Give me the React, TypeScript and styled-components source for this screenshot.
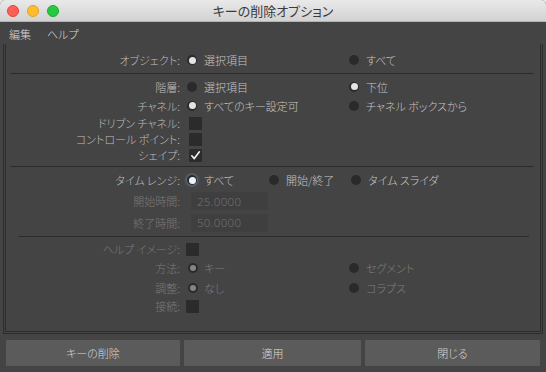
import React from 'react';
import styled, { createGlobalStyle } from 'styled-components';

const GlobalStyle = createGlobalStyle`
  html, body {
    margin: 0;
    padding: 0;
    background: #ececec;
  }
`;

const Window = styled.div`
  width: 546px;
  height: 372px;
  display: flex;
  flex-direction: column;
  background: #444444;
  border-radius: 5px 5px 0 0;
  overflow: hidden;
  font-family: "Noto Sans CJK JP", "Noto Sans", sans-serif;
  font-feature-settings: "palt";
  font-weight: 300;
  font-size: 11px;
`;

const TitleBar = styled.div`
  flex: none;
  height: 22px;
  box-sizing: border-box;
  display: grid;
  grid-template-columns: 1fr auto 1fr;
  align-items: center;
  background: linear-gradient(#e9e9e9, #d2d2d2);
  border-bottom: 1px solid #b4b4b4;
`;

const Lights = styled.div`
  display: flex;
  gap: 8px;
  padding-left: 7px;
`;

const Light = styled.span<{ $c: string; $b: string }>`
  width: 12px;
  height: 12px;
  border-radius: 50%;
  box-sizing: border-box;
  background: ${(p) => p.$c};
  border: 1px solid ${(p) => p.$b};
`;

const Title = styled.div`
  font-size: 13px;
  font-weight: 400;
  color: #3a3a3a;
  line-height: 1;
`;

const MenuBar = styled.div`
  flex: none;
  height: 22px;
  display: flex;
  align-items: center;
  gap: 16px;
  padding: 1px 0 0 9px;
  box-sizing: border-box;
  color: #d8d8d8;
`;

const Frame = styled.div`
  flex: none;
  height: 290px;
  margin: 0 3px;
  box-sizing: border-box;
  border: 1px solid #2c2c2c;
  border-top: 0;
  padding: 0 1px 1px;
  display: flex;
`;

const Inner = styled.div`
  flex: 1;
  border: 1px solid #2c2c2c;
  border-top: 0;
  padding-top: 6px;
  display: flex;
  flex-direction: column;
`;

const Separator = styled.div<{ $l: number; $r: number }>`
  height: 1px;
  background: #2c2c2c;
  margin: 3px ${(p) => p.$r}px 3px ${(p) => p.$l}px;
  flex: none;
`;

const Row = styled.div<{ $h: number }>`
  flex: none;
  height: ${(p) => p.$h}px;
  display: grid;
  grid-template-columns: 175px 1fr;
  align-items: center;
`;

const Label = styled.span<{ $dim?: boolean }>`
  text-align: right;
  padding-right: 1px;
  white-space: nowrap;
  color: ${(p) => (p.$dim ? '#7a7a7a' : '#bdbdbd')};
`;

const Controls = styled.div<{ $indent: number }>`
  display: flex;
  align-items: center;
  padding-left: ${(p) => p.$indent}px;
`;

const Option = styled.span<{ $w?: number; $dim?: boolean; $gap?: number }>`
  display: inline-flex;
  align-items: center;
  gap: ${(p) => p.$gap ?? 7}px;
  width: ${(p) => (p.$w ? `${p.$w}px` : 'auto')};
  white-space: nowrap;
  color: ${(p) => (p.$dim ? '#7e7e7e' : '#c4c4c4')};
`;

const Dot = styled.span<{ $on?: boolean; $dim?: boolean; $focus?: boolean }>`
  flex: none;
  width: 10px;
  height: 10px;
  border-radius: 50%;
  background: #2a2a2a;
  display: flex;
  align-items: center;
  justify-content: center;
  box-shadow: ${(p) => (p.$focus ? '0 0 3px 1px rgba(120, 165, 215, 0.55)' : 'none')};

  &::after {
    content: '';
    display: ${(p) => (p.$on ? 'block' : 'none')};
    width: ${(p) => (p.$dim ? 6 : 7)}px;
    height: ${(p) => (p.$dim ? 6 : 7)}px;
    border-radius: 50%;
    background: ${(p) => (p.$dim ? '#858585' : p.$focus ? '#eef3fa' : '#e4e4e4')};
  }
`;

const Box = styled.span`
  flex: none;
  width: 13px;
  height: 13px;
  background: #2b2b2b;
  display: flex;
  align-items: center;
  justify-content: center;
`;

const Field = styled.div`
  width: 77px;
  height: 18px;
  box-sizing: border-box;
  padding-left: 6px;
  display: flex;
  align-items: center;
  background: #3f3f3f;
  color: #707070;
  font-family: "Noto Sans", sans-serif;
  font-size: 11.5px;
  letter-spacing: 0.3px;
`;

const ButtonBar = styled.div`
  flex: none;
  margin-top: 6px;
  padding: 0 6px;
  height: 26px;
  display: grid;
  grid-template-columns: 174px 177px 175px;
  gap: 4px;
`;

const Button = styled.div`
  display: flex;
  align-items: center;
  justify-content: center;
  background: #5b5b5b;
  color: #d8d8d8;
  border-radius: 1px;
`;

const Radio: React.FC<{ on?: boolean; dim?: boolean; focus?: boolean; w?: number; gap?: number; children: React.ReactNode }> = ({ on, dim, focus, w, gap, children }) => (
  <Option $w={w} $dim={dim} $gap={gap}>
    <Dot $on={on} $dim={dim} $focus={focus} />
    {children}
  </Option>
);

const Check: React.FC<{ on?: boolean }> = ({ on }) => (
  <Box>
    {on && (
      <svg width="11" height="11" viewBox="0 0 11 11">
        <path d="M1.8 5.8 L4.3 8.6 L9.4 1.8" fill="none" stroke="#f2f2f2" strokeWidth="1.6" strokeLinecap="round" strokeLinejoin="round" />
      </svg>
    )}
  </Box>
);

export default function App() {
  return (
    <>
      <GlobalStyle />
      <Window>
        <TitleBar>
          <Lights>
            <Light $c="#fe5f57" $b="#e0443e" />
            <Light $c="#febc2e" $b="#dea123" />
            <Light $c="#28c840" $b="#1aab29" />
          </Lights>
          <Title>キーの削除オプション</Title>
          <span />
        </TitleBar>
        <MenuBar>
          <span>編集</span>
          <span>ヘルプ</span>
        </MenuBar>
        <Frame>
          <Inner>
            <Row $h={20}>
              <Label>オブジェクト:</Label>
              <Controls $indent={6}>
                <Radio on w={162}>選択項目</Radio>
                <Radio>すべて</Radio>
              </Controls>
            </Row>
            <Separator $l={4} $r={6} />
            <Row $h={19}>
              <Label>階層:</Label>
              <Controls $indent={6}>
                <Radio w={162}>選択項目</Radio>
                <Radio on>下位</Radio>
              </Controls>
            </Row>
            <Row $h={19}>
              <Label>チャネル:</Label>
              <Controls $indent={6}>
                <Radio on w={162}>すべてのキー設定可</Radio>
                <Radio>チャネル ボックスから</Radio>
              </Controls>
            </Row>
            <Row $h={16}>
              <Label>ドリブン チャネル:</Label>
              <Controls $indent={8}>
                <Check />
              </Controls>
            </Row>
            <Row $h={16}>
              <Label>コントロール ポイント:</Label>
              <Controls $indent={8}>
                <Check />
              </Controls>
            </Row>
            <Row $h={16}>
              <Label>シェイプ:</Label>
              <Controls $indent={8}>
                <Check on />
              </Controls>
            </Row>
            <Separator $l={4} $r={6} />
            <Row $h={20}>
              <Label>タイム レンジ:</Label>
              <Controls $indent={6}>
                <Radio on focus w={82}>すべて</Radio>
                <Radio w={82}>開始/終了</Radio>
                <Radio>タイム スライダ</Radio>
              </Controls>
            </Row>
            <Row $h={22}>
              <Label $dim>開始時間:</Label>
              <Controls $indent={10}>
                <Field>25.0000</Field>
              </Controls>
            </Row>
            <Row $h={21}>
              <Label $dim>終了時間:</Label>
              <Controls $indent={10}>
                <Field>50.0000</Field>
              </Controls>
            </Row>
            <Separator $l={12} $r={11} />
            <Row $h={18}>
              <Label $dim>ヘルプ イメージ:</Label>
              <Controls $indent={5}>
                <Check />
              </Controls>
            </Row>
            <Row $h={20}>
              <Label $dim>方法:</Label>
              <Controls $indent={7}>
                <Radio on dim w={161} gap={6}>キー</Radio>
                <Radio dim>セグメント</Radio>
              </Controls>
            </Row>
            <Row $h={20}>
              <Label $dim>調整:</Label>
              <Controls $indent={7}>
                <Radio on dim w={161} gap={6}>なし</Radio>
                <Radio dim>コラプス</Radio>
              </Controls>
            </Row>
            <Row $h={14}>
              <Label $dim>接続:</Label>
              <Controls $indent={5}>
                <Check />
              </Controls>
            </Row>
          </Inner>
        </Frame>
        <ButtonBar>
          <Button>キーの削除</Button>
          <Button>適用</Button>
          <Button>閉じる</Button>
        </ButtonBar>
      </Window>
    </>
  );
}
